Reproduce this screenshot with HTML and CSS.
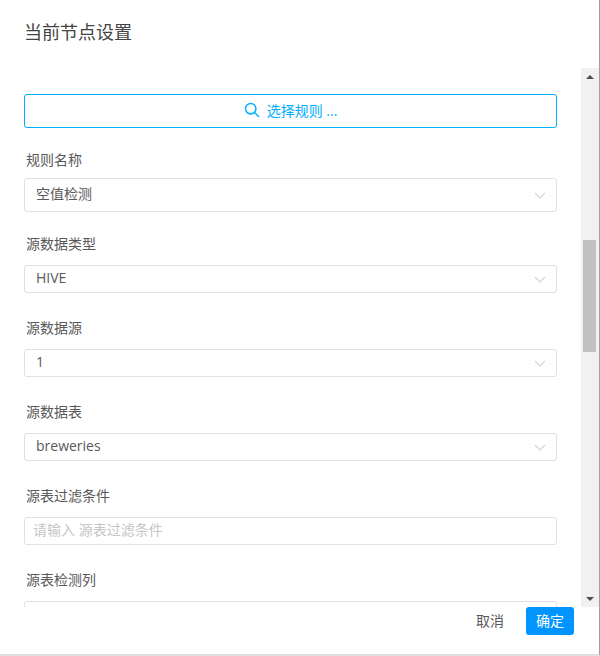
FILE: index.html
```html
<!DOCTYPE html>
<html lang="zh-CN">
<head>
    <meta charset="UTF-8">
    <title>当前节点设置</title>
    <link rel="stylesheet" href="styles.css">
</head>
<body>
    <div class="modal">
        <div class="modal-title">当前节点设置</div>
        <div class="modal-body">
            <div class="form-pane">
                <button class="rule-button">
                    <svg class="search-icon" viewBox="0 0 16 16" width="16" height="16">
                        <circle cx="6.7" cy="6.7" r="5.2"></circle>
                        <path d="M10.5 10.5L15 15"></path>
                    </svg>
                    <span>选择规则 ...</span>
                </button>

                <div class="form-group first-group">
                    <label class="tight-label">规则名称</label>
                    <div class="select tall-select">
                        <span>空值检测</span>
                        <svg class="arrow" viewBox="0 0 12 7" width="12" height="7"><path d="M1 1L6 6L11 1"></path></svg>
                    </div>
                </div>
                <div class="form-group second-group">
                    <label>源数据类型</label>
                    <div class="select">
                        <span>HIVE</span>
                        <svg class="arrow" viewBox="0 0 12 7" width="12" height="7"><path d="M1 1L6 6L11 1"></path></svg>
                    </div>
                </div>
                <div class="form-group">
                    <label>源数据源</label>
                    <div class="select">
                        <span>1</span>
                        <svg class="arrow" viewBox="0 0 12 7" width="12" height="7"><path d="M1 1L6 6L11 1"></path></svg>
                    </div>
                </div>
                <div class="form-group">
                    <label>源数据表</label>
                    <div class="select">
                        <span>breweries</span>
                        <svg class="arrow" viewBox="0 0 12 7" width="12" height="7"><path d="M1 1L6 6L11 1"></path></svg>
                    </div>
                </div>
                <div class="form-group">
                    <label>源表过滤条件</label>
                    <input class="text-input" type="text" placeholder="请输入 源表过滤条件">
                </div>
                <div class="form-group">
                    <label>源表检测列</label>
                    <div class="select"></div>
                </div>
            </div>
            <div class="scrollbar">
                <div class="scroll-up"></div>
                <div class="scroll-track">
                    <div class="scroll-thumb"></div>
                </div>
                <div class="scroll-down"></div>
            </div>
        </div>
        <div class="modal-footer">
            <button class="cancel-button">取消</button>
            <button class="ok-button">确定</button>
        </div>
    </div>
</body>
</html>
```

FILE: styles.css
```css
html, body {
    margin: 0;
    height: 100%;
}
body {
    background: #fff;
    font-family: "Open Sans", "Noto Sans CJK SC", sans-serif;
    font-size: 14px;
    color: #595959;
    overflow: hidden;
}
.modal {
    box-sizing: border-box;
    width: 600px;
    height: 656px;
    display: flex;
    flex-direction: column;
    background: #fff;
    border-right: 1px solid #a0a0a4;
    border-bottom: 2px solid #e0e0e0;
}
.modal-title {
    height: 68px;
    flex: none;
    box-sizing: border-box;
    padding: 20px 24px 0;
    font-size: 18px;
    line-height: 24px;
    color: #444;
}
.modal-body {
    height: 539px;
    flex: none;
    display: flex;
    overflow: hidden;
}
.form-pane {
    width: 533px;
    flex: none;
    padding: 26px 0 0 24px;
}
.rule-button {
    display: flex;
    align-items: center;
    justify-content: center;
    gap: 7px;
    width: 100%;
    height: 34px;
    padding: 0 0 2px;
    border: 1px solid #00aeff;
    border-radius: 3px;
    background: #fff;
    font: inherit;
    color: #00aeff;
}
.search-icon {
    fill: none;
    stroke: #00aeff;
    stroke-width: 1.5;
}
.form-group {
    margin-top: 25px;
}
.first-group,
.second-group {
    margin-top: 22px;
}
label {
    display: block;
    height: 20px;
    line-height: 20px;
    margin: 0 0 11px 2px;
    color: #595959;
}
.tight-label {
    margin-bottom: 8px;
}
.select {
    display: flex;
    align-items: center;
    justify-content: space-between;
    box-sizing: border-box;
    height: 28px;
    padding: 0 10px 4px 11px;
    border: 1px solid #e0e0e4;
    border-radius: 3px;
    color: #595959;
}
.tall-select {
    height: 34px;
}
.arrow {
    fill: none;
    stroke: #d4d4d4;
    stroke-width: 1.2;
    margin-top: 4px;
}
.text-input {
    display: block;
    box-sizing: border-box;
    width: 100%;
    height: 28px;
    padding: 0 8px 4px;
    border: 1px solid #e0e0e4;
    border-radius: 3px;
    font: inherit;
    outline: none;
}
.text-input::placeholder {
    color: #c6c6c6;
}
.scrollbar {
    width: 18px;
    margin-left: 24px;
    flex: none;
    display: flex;
    flex-direction: column;
    background: #f1f1f1;
}
.scroll-up,
.scroll-down {
    height: 17px;
    flex: none;
    display: flex;
    align-items: center;
    justify-content: center;
}
.scroll-up::before {
    content: "";
    border: 4px solid transparent;
    border-top: 0;
    border-bottom: 4px solid #505050;
}
.scroll-down::before {
    content: "";
    border: 4px solid transparent;
    border-bottom: 0;
    border-top: 4px solid #505050;
}
.scroll-track {
    flex: 1;
    padding: 155px 3px 0 2px;
}
.scroll-thumb {
    height: 112px;
    background: #c1c1c1;
}
.modal-footer {
    flex: 1;
    display: flex;
    justify-content: flex-end;
    align-items: flex-start;
    gap: 10px;
    padding-right: 25px;
}
.cancel-button,
.ok-button {
    height: 28px;
    padding: 0 0 2px;
    border: 0;
    border-radius: 3px;
    font: inherit;
}
.cancel-button {
    width: 56px;
    margin-right: -2px;
    background: #fff;
    color: #595959;
}
.ok-button {
    width: 48px;
    background: #0094ff;
    color: #fff;
}
```
